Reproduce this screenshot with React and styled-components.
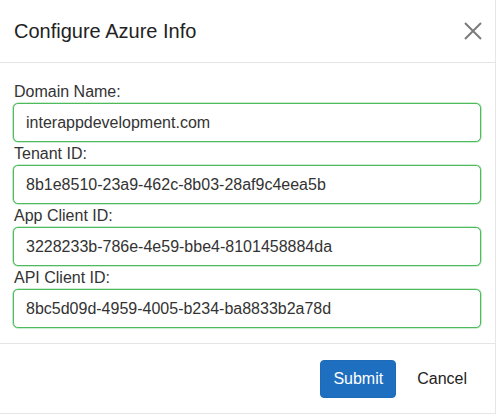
import React from "react";
import styled, { createGlobalStyle } from "styled-components";

const Global = createGlobalStyle`
  html, body { margin: 0; padding: 0; background: #fff; }
  body { font-family: "Liberation Sans", Arial, sans-serif; }
  * { box-sizing: border-box; }
`;

const Modal = styled.div`
  width: 496px;
  height: 414px;
  background: #fff;
  border-right: 1px solid #e6e6e6;
  border-bottom: 1px solid #e6e6e6;
  display: flex;
  flex-direction: column;
`;

const Header = styled.div`
  height: 63px;
  padding: 0 13px 0 14px;
  border-bottom: 1px solid #e5e5e5;
  display: flex;
  align-items: center;
  justify-content: space-between;
`;

const Title = styled.h4`
  margin: 0;
  font-size: 20px;
  line-height: 28px;
  font-weight: normal;
  color: #222;
`;

const CloseButton = styled.button`
  border: 0;
  background: none;
  padding: 0;
  width: 18px;
  height: 18px;
  display: flex;
  cursor: pointer;
`;

const Body = styled.div`
  padding: 17px 14px 15px 13px;
  border-bottom: 1px solid #e5e5e5;
  display: flex;
  flex-direction: column;
`;

const Label = styled.label`
  display: block;
  padding-left: 1px;
  font-size: 16px;
  line-height: 23px;
  color: #333;
`;

const Input = styled.input`
  display: block;
  width: 100%;
  height: 39px;
  padding: 0 12px;
  border: 1px solid #4dbb5b;
  box-shadow: 0 0 0 0.6px rgba(77, 187, 91, 0.55);
  border-radius: 5px;
  font-family: "Liberation Sans", Arial, sans-serif;
  font-size: 16px;
  color: #333;
  background: #fff;
  outline: none;
`;

const Footer = styled.div`
  padding: 16px 15px 0 0;
  display: flex;
  justify-content: flex-end;
  gap: 8px;
`;

const Button = styled.button`
  height: 38px;
  padding: 0 12px;
  border-radius: 4px;
  font-family: "Liberation Sans", Arial, sans-serif;
  font-size: 16px;
  cursor: pointer;
  border: 1px solid ${(p) => (p.$primary ? "#1d6ab9" : "transparent")};
  background: ${(p) => (p.$primary ? "#1f6fc1" : "transparent")};
  color: ${(p) => (p.$primary ? "#fff" : "#222")};
`;

const fields = [
  ["Domain Name:", "interappdevelopment.com"],
  ["Tenant ID:", "8b1e8510-23a9-462c-8b03-28af9c4eea5b"],
  ["App Client ID:", "3228233b-786e-4e59-bbe4-8101458884da"],
  ["API Client ID:", "8bc5d09d-4959-4005-b234-ba8833b2a78d"],
];

export default function App() {
  return (
    <>
      <Global />
      <Modal>
        <Header>
          <Title>Configure Azure Info</Title>
          <CloseButton aria-label="Close">
            <svg width="18" height="18" viewBox="0 0 18 18">
              <path d="M1 1 L17 17 M17 1 L1 17" stroke="#7b7b7b" strokeWidth="2" fill="none" />
            </svg>
          </CloseButton>
        </Header>
        <Body>
          {fields.map(([label, value]) => (
            <div key={label}>
              <Label>{label}</Label>
              <Input defaultValue={value} />
            </div>
          ))}
        </Body>
        <Footer>
          <Button $primary>Submit</Button>
          <Button>Cancel</Button>
        </Footer>
      </Modal>
    </>
  );
}
